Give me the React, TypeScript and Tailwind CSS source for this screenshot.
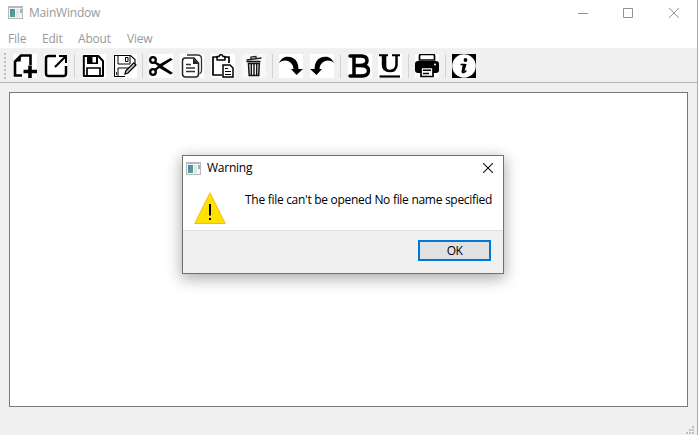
import React from "react";

function Icon({ children, className = "bg-white" }: { children: React.ReactNode; className?: string }) {
  return (
    <svg viewBox="0 0 24 24" className={`block size-6 shrink-0 ${className}`} fill="none" stroke="#000">
      {children}
    </svg>
  );
}

function Separator() {
  return <div className="h-6 w-px shrink-0 bg-[#d2d2d2]" />;
}

function AppIcon() {
  return (
    <svg viewBox="0 0 15 13" className="block h-[13px] w-[15px] shrink-0">
      <defs>
        <linearGradient id="pane" x1="0" y1="0" x2="1" y2="1">
          <stop offset="0" stopColor="#5580b0" />
          <stop offset="1" stopColor="#58ab7c" />
        </linearGradient>
      </defs>
      <path d="M0 0h15v13H0z" fill="#b5bac1" />
      <path d="M1 2h13v10H1z" fill="#f4f5f6" />
      <path d="M2 3h5v8H2z" fill="url(#pane)" />
      <path d="M8 3h3v8H8z" fill="#e3e5e7" />
      <path d="M12 3h2v4h-2z" fill="#8fbcb6" />
    </svg>
  );
}

function Toolbar() {
  return (
    <div className="flex h-[35px] shrink-0 items-center border-t border-b border-t-[#f3f3f3] border-b-[#b5b5b5] bg-[#f0f0f0] pl-1">
      <svg viewBox="0 0 3 26" className="mr-[6px] block h-[26px] w-[3px] shrink-0">
        {[0, 4, 8, 12, 16, 20, 24].map((y) => (
          <g key={y}>
            <path d={`M1 ${y + 1}h2v1H1z`} fill="#fff" />
            <path d={`M0 ${y}h2v2H0z`} fill="#bdbdbd" />
          </g>
        ))}
      </svg>
      <div className="flex items-center gap-[7px]">
        <Icon>
          <path d="M17.500 11V1.500H8L2 7.500v14h7" strokeWidth="2.600" />
          <path d="M7.800 1v6.500H1.500L8 1z" fill="#000" stroke="none" />
          <path d="M17 11.500V24M10.500 17.500H24" strokeWidth="3.600" />
        </Icon>
        <Icon>
          <path d="M12 2H4.500Q2 2 2 4.500v15Q2 22 4.500 22h15Q22 22 22 19.500V12" strokeWidth="2.500" />
          <path d="M11 13 21 3M15 2h7v7" strokeWidth="2.100" />
        </Icon>
      </div>
      <div className="ml-[6px] mr-[7px]"><Separator /></div>
      <div className="flex items-center gap-[7px]">
        <Icon>
          <path d="M1.800 2h14.500L21 7v15H1.800z" strokeWidth="2" strokeLinejoin="round" />
          <path d="M5 2h11v8H5z" fill="#000" stroke="none" />
          <path d="M10.500 3h3.500v5.500h-3.500z" fill="#fff" stroke="none" />
          <path d="M5 22v-8h13v8" strokeWidth="1.700" />
        </Icon>
        <Icon>
          <path d="M12 22.500H1.500v-21h16l4.500 4v6" strokeWidth="1.100" />
          <path d="M5 2v8h12V2M12.500 3.500H15v4h-2.500zM5 22v-8h11" strokeWidth="1" />
          <path d="M3.500 18v3" strokeWidth=".8" />
          <path d="m12 20 .8-3.200 8-8 2.200 2.200-8 8z" fill="#bbb" strokeWidth="1.200" />
        </Icon>
      </div>
      <div className="ml-[5px] mr-[6px]"><Separator /></div>
      <div className="flex items-center gap-[7px]">
        <Icon>
          <circle cx="4" cy="6" r="2.800" strokeWidth="2.300" />
          <circle cx="4" cy="18" r="2.800" strokeWidth="2.300" />
          <path d="M6 7.200 11 10 21.500 4l2.300 1.500L13.500 12 24 19l-2.500 1.500-11-6.500L6.500 17 5 15.500 9 12 5 9z" fill="#000" stroke="none" />
        </Icon>
        <Icon>
          <path d="M7 1h10.500Q21.500 1 21.500 5v12q0 2-2 2.500" stroke="#333" strokeWidth="1.300" />
          <path d="M5 4h9l4.500 5v11q0 3-3 3H5.500q-3 0-3-3V7q0-3 2.500-3z" fill="#fff" stroke="#222" strokeWidth="1.500" />
          <path d="M13 4v6h5.500z" fill="#222" stroke="none" />
          <path d="M6 10.500h5M6 14h9M6 17.500h9" stroke="#333" strokeWidth="1.500" />
        </Icon>
        <Icon>
          <path d="M7 3H2v18h9M13 3h5v6" strokeWidth="1.700" strokeLinejoin="round" />
          <path d="M6 2.500h2Q8.500.700 10 .7t2 1.800h2V6H6z" strokeWidth="1.500" strokeLinejoin="round" />
          <path d="M12 11h7l3 3v9H12z" strokeWidth="1.500" />
          <path d="M14 14.500h3M14 17.500h6M14 20.500h6" strokeWidth="1.200" />
        </Icon>
        <Icon className="bg-[#f8f8f8]">
          <path d="m4.500 6 15-2M9 5V3l5-.500V4" stroke="#222" strokeWidth="1.300" />
          <path d="M4.500 7.500h14M6.500 9.500h10.800L16.700 21.500H7.200z" stroke="#111" strokeWidth="1.500" />
          <path d="M9.300 9.500v12M12 9.500v12M14.700 9.500v12" stroke="#111" strokeWidth="1.400" />
        </Icon>
      </div>
      <div className="mx-[6px]"><Separator /></div>
      <div className="flex items-center gap-[7px]">
        <Icon>
          <path d="M0 9C3 2 9 1.500 14 4q5.500 3 5.500 11H24l-6.500 6L12 15h2.500C14 8 7 3.500 0 9z" fill="#000" stroke="none" />
        </Icon>
        <Icon>
          <path d="M24 9C21 2 15 1.500 10 4q-5.500 3-5.500 11H0l6.500 6L12 15H9.500C10 8 17 3.500 24 9z" fill="#000" stroke="none" />
        </Icon>
      </div>
      <div className="ml-[6px] mr-[7px]"><Separator /></div>
      <div className="flex items-center gap-[6px]">
        <Icon>
          <path d="M2 2h11M2 22h11M6 2v20M6 11.500h8" strokeWidth="3.500" strokeLinecap="round" />
          <path d="M13 2q6 0 6 4.500t-6 5q7.500 0 7.500 5.300T13 22" strokeWidth="3.500" />
        </Icon>
        <Icon>
          <path d="M1 1.200h9M14 1.200h8" strokeWidth="2" />
          <path d="M5.800 1v10q0 6 6 6t6.700-6V1" strokeWidth="2.500" />
          <path d="M3.800 1h4.500v10.500q0 4.500 4 5v1.300Q3.800 18 3.800 11z" fill="#000" stroke="none" />
          <path d="M1.500 22.500h20.500" strokeWidth="2.200" />
        </Icon>
      </div>
      <div className="mx-[6px]"><Separator /></div>
      <Icon>
        <path d="M4.500 6V2q0-1.500 1.500-1.500h12q1.500 0 1.500 1.500v4z" fill="#fff" strokeWidth="1.700" />
        <path d="M3 7h18q3 0 3 3v6q0 3-3 3H3q-3 0-3-3v-6q0-3 3-3z" fill="#000" stroke="none" />
        <path d="M6 13.500h12v9H6z" fill="#fff" strokeWidth="1.700" />
        <path d="M8 16.300h8M8 19.500h6" strokeWidth="1.400" />
        <circle cx="20" cy="10.500" r="1" fill="#fff" stroke="none" />
      </Icon>
      <div className="mx-[6px]"><Separator /></div>
      <Icon className="bg-black">
        <circle cx="12" cy="12" r="11.800" fill="#fff" stroke="none" />
        <circle cx="13.500" cy="6" r="1.900" fill="#000" stroke="none" />
        <path d="M8.500 10.500h3.800L10.500 17q-.5 2 1 1.500t2.800-2" strokeWidth="1.500" />
        <path d="M10.800 10h3.800l-2.200 7.500-2.700.5z" fill="#000" stroke="none" />
      </Icon>
    </div>
  );
}

function WarningDialog() {
  return (
    <div className="absolute left-[182px] top-[155px] flex h-[119px] w-[322px] flex-col border border-[#707070] bg-white text-black shadow-[0_4px_14px_1px_rgba(0,0,0,0.32)]">
      <div className="flex h-6 shrink-0 items-center pl-[3px] pr-[10px]">
        <AppIcon />
        <span className="ml-[6px] text-[12px] leading-4 tracking-[-0.25px]">Warning</span>
        <svg viewBox="0 0 10 10" className="ml-auto block size-[10px]" stroke="#111" strokeWidth="1.100">
          <path d="m0 0 10 10M10 0 0 10" />
        </svg>
      </div>
      <div className="flex h-[50px] shrink-0 items-start pl-[11px] pt-3">
        <svg viewBox="0 0 32 32" className="block size-8 shrink-0">
          <path d="M16 .8 31.300 31.500H.7z" fill="#ffe100" stroke="#fdb913" />
          <path d="M15 12h2v11.500h-2zM15 26h2v2h-2z" fill="#000" />
        </svg>
        <span className="ml-[19px] whitespace-nowrap text-[12px] leading-4 tracking-[-0.29px]">The file can't be opened No file name specified</span>
      </div>
      <div className="flex flex-1 items-start justify-end border-t border-[#dfdfdf] bg-[#f0f0f0] pr-3 pt-[9px]">
        <button className="flex h-[21px] w-[73px] items-center justify-center border-2 border-[#0078d7] bg-[#e1e1e1] text-[12px] leading-4 tracking-[-0.5px]">OK</button>
      </div>
    </div>
  );
}

export default function App() {
  return (
    <div className="relative flex h-[435px] w-[698px] flex-col overflow-hidden border-r border-[#aaaaaa] bg-[#f0f0f0] font-['Open_Sans','Noto_Sans',sans-serif] text-[12px] text-[#999999]">
      <header className="flex h-[25px] shrink-0 items-center bg-white pl-2">
        <AppIcon />
        <span className="ml-[6px] leading-4 tracking-[-0.2px]">MainWindow</span>
        <svg viewBox="0 0 102 12" className="ml-auto mr-[17px] block h-3 w-[102px]" fill="none" stroke="#929292">
          <path d="M0 6.500h10M45.500 1.500h9v9h-9zM91 1l10 10M101 1 91 11" />
        </svg>
      </header>
      <nav className="flex h-[23px] shrink-0 items-center bg-white pl-2 pt-[5px] leading-4 tracking-[-0.2px]">
        <span className="w-[34px]">File</span>
        <span className="w-9">Edit</span>
        <span className="w-[49px]">About</span>
        <span>View</span>
      </nav>
      <Toolbar />
      <main className="ml-[9px] mr-[9px] mt-[9px] h-[315px] shrink-0 border border-[#7a7a7a] bg-white" />
      <footer className="flex flex-1 items-end justify-end pb-[1px] pr-[3px]">
        <svg viewBox="0 0 8 8" className="block size-2" fill="#bfbfbf">
          <path d="M6 0h2v2H6zM3 3h2v2H3zM6 3h2v2H6zM0 6h2v2H0zM3 6h2v2H3zM6 6h2v2H6z" />
        </svg>
      </footer>
      <WarningDialog />
    </div>
  );
}
